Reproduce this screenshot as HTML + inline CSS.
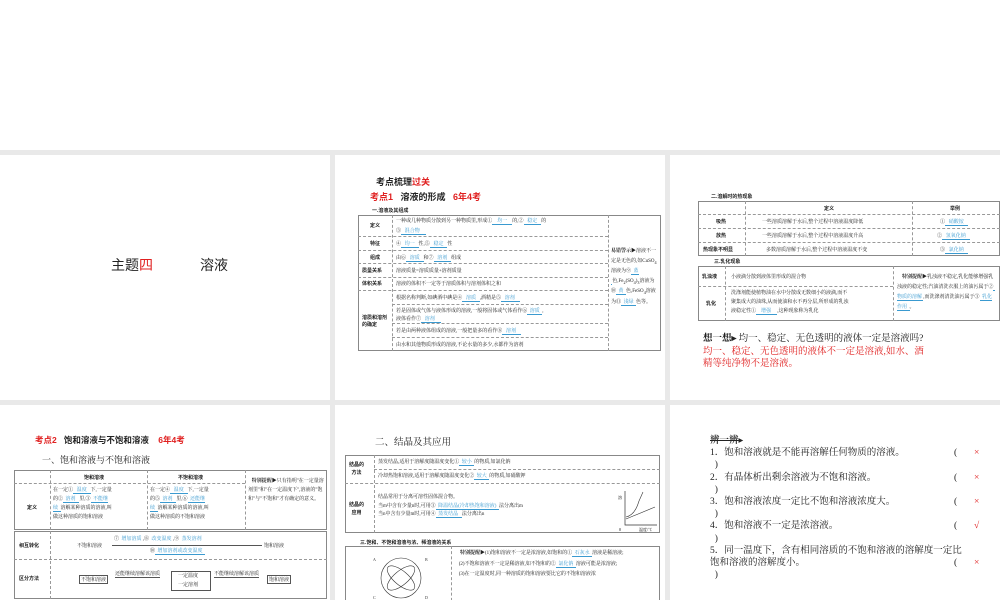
<!DOCTYPE html>
<html><head><meta charset="utf-8"><style>
*{margin:0;padding:0;box-sizing:border-box}
body{width:1000px;height:600px;background:#fff;position:relative;overflow:hidden;font-family:"Liberation Serif","Noto Serif CJK SC",serif;color:#222}
.bg{position:absolute;left:0;top:150px;width:1000px;height:450px;background:#e9e9e9}
.s{position:absolute;background:#fff;overflow:hidden}
.a{position:absolute;white-space:nowrap}
.r{color:#e02020}
.b{color:#3a9ad0}
.t{position:absolute;border:1px solid #888}
.h{position:absolute;border-top:1px dashed #999}
.v{position:absolute;border-left:1px dashed #999}
.f5{font-size:5px}.f6{font-size:6px}
.bold{font-weight:bold;font-family:"Liberation Sans","Noto Sans CJK SC",sans-serif}
.u{border-bottom:1px solid #3a9ad0}
</style></head><body>
<div class="bg"></div>

<!-- slide 1 -->
<div class="s" style="left:0;top:155px;width:330px;height:245px">
<div class="a" style="left:111px;top:100px;font-size:14px;font-family:'Liberation Sans','Noto Sans CJK SC',sans-serif">主题<span class="r">四</span></div>
<div class="a" style="left:200px;top:100px;font-size:14px;font-family:'Liberation Sans','Noto Sans CJK SC',sans-serif">溶液</div>
</div>

<!-- slide 2 -->
<div class="s" style="left:335px;top:155px;width:330px;height:245px">
<div class="a bold" style="left:41px;top:20px;font-size:9px">考点梳理<span class="r">过关</span></div>
<div class="a bold" style="left:35px;top:35px;font-size:9px"><span class="r">考点1</span>&nbsp;&nbsp; 溶液的形成 &nbsp;&nbsp;<span class="r">6年4考</span></div>
<div class="a bold f5" style="left:37px;top:52px">一.溶液及其组成</div>
<div class="t" style="left:23px;top:60px;width:303px;height:136px"></div>
<div class="v" style="left:57px;top:60px;height:136px"></div>
<div class="v" style="left:273px;top:60px;height:136px"></div>
<div class="h" style="left:23px;top:81px;width:250px"></div>
<div class="h" style="left:23px;top:95px;width:250px"></div>
<div class="h" style="left:23px;top:108px;width:250px"></div>
<div class="h" style="left:23px;top:122px;width:250px"></div>
<div class="h" style="left:23px;top:135px;width:250px"></div>
<div class="h" style="left:57px;top:149px;width:216px"></div>
<div class="h" style="left:57px;top:168px;width:216px"></div>
<div class="h" style="left:57px;top:182px;width:216px"></div>
<div class="a bold f5" style="left:35px;top:67px">定义</div>
<div class="a bold f5" style="left:35px;top:85px">特征</div>
<div class="a bold f5" style="left:35px;top:99px">组成</div>
<div class="a bold f5" style="left:27px;top:112px">质量关系</div>
<div class="a bold f5" style="left:27px;top:125px">体积关系</div>
<div class="a bold f5" style="left:27px;top:160px;line-height:7px;white-space:normal;width:28px">溶质和溶剂的确定</div>
<div class="a f5" style="left:61px;top:62px">一种或几种物质分散到另一种物质里,形成①<span class="b u">&nbsp;&nbsp;&nbsp; 均一 &nbsp;&nbsp;&nbsp;</span>的,②<span class="b u">&nbsp;&nbsp; 稳定 &nbsp;&nbsp;</span>的</div>
<div class="a f5" style="left:61px;top:72px">③<span class="b u">&nbsp;&nbsp; 混合物 &nbsp;&nbsp;&nbsp;&nbsp;</span></div>
<div class="a f5" style="left:61px;top:85px">④<span class="b u">&nbsp;&nbsp; 均一 &nbsp;&nbsp;</span>性,⑤<span class="b u">&nbsp;&nbsp; 稳定 &nbsp;&nbsp;</span>性</div>
<div class="a f5" style="left:61px;top:99px">由⑥<span class="b u">&nbsp;&nbsp; 溶质 &nbsp;&nbsp;</span>和⑦<span class="b u">&nbsp;&nbsp; 溶剂 &nbsp;&nbsp;</span>组成</div>
<div class="a f5" style="left:61px;top:112px">溶液质量=溶质质量+溶剂质量</div>
<div class="a f5" style="left:61px;top:125px">溶液的体积不一定等于溶质体积与溶剂体积之和</div>
<div class="a f5" style="left:61px;top:139px">根据名称判断,如碘酒中碘是④<span class="b u">&nbsp;&nbsp; 溶质 &nbsp;&nbsp;</span>,酒精是⑤<span class="b u">&nbsp;&nbsp; 溶剂 &nbsp;&nbsp;&nbsp;</span></div>
<div class="a f5" style="left:61px;top:152px">若是固体或气体与液体形成的溶液,一般将固体或气体看作⑥<span class="b u">&nbsp; 溶质 &nbsp;</span>,</div>
<div class="a f5" style="left:61px;top:160px">液体看作⑦<span class="b u">&nbsp;&nbsp; 溶剂 &nbsp;&nbsp;&nbsp;&nbsp;</span></div>
<div class="a f5" style="left:61px;top:172px">若是由两种液体组成的溶液,一般把量多的看作⑧<span class="b u">&nbsp;&nbsp; 溶剂 &nbsp;&nbsp;&nbsp;</span></div>
<div class="a f5" style="left:61px;top:186px">由水和其他物质形成的溶液,不论水量的多少,水都作为溶剂</div>
<div class="a f5" style="left:276px;top:92px;line-height:9.5px;white-space:normal;width:48px"><b>易错警示▶</b>溶液不一定是无色的,如CuSO<sub>4</sub>溶液为⑨<span class="b u">&nbsp; 蓝 &nbsp;</span>色,Fe<sub>2</sub>(SO<sub>4</sub>)<sub>3</sub>溶液为⑩<span class="b u">&nbsp; 黄 &nbsp;</span>色,FeSO<sub>4</sub>溶液为⑪<span class="b u">&nbsp; 浅绿 &nbsp;</span>色等。</div>
</div>

<!-- slide 3 -->
<div class="s" style="left:670px;top:155px;width:330px;height:245px">
<div class="a bold f5" style="left:41px;top:38px">二.溶解时的热现象</div>
<div class="t" style="left:28px;top:46px;width:302px;height:55px"></div>
<div class="v" style="left:75px;top:46px;height:55px"></div>
<div class="v" style="left:242px;top:46px;height:55px"></div>
<div class="h" style="left:28px;top:59px;width:302px"></div>
<div class="h" style="left:28px;top:73px;width:302px"></div>
<div class="h" style="left:28px;top:87px;width:302px"></div>
<div class="a bold f5" style="left:154px;top:50px">定义</div>
<div class="a bold f5" style="left:280px;top:50px">举例</div>
<div class="a bold f5" style="left:46px;top:63px">吸热</div>
<div class="a bold f5" style="left:46px;top:77px">放热</div>
<div class="a bold f5" style="left:33px;top:91px">热现象不明显</div>
<div class="a f5" style="left:92px;top:63px">一些溶质溶解于水后,整个过程中溶液温度降低</div>
<div class="a f5" style="left:92px;top:77px">一些溶质溶解于水后,整个过程中溶液温度升高</div>
<div class="a f5" style="left:96px;top:91px">多数溶质溶解于水后,整个过程中溶液温度不变</div>
<div class="a f5" style="left:270px;top:63px">①<span class="b u">&nbsp;&nbsp; 硝酸铵 &nbsp;&nbsp;</span></div>
<div class="a f5" style="left:267px;top:77px">②<span class="b u">&nbsp;&nbsp; 氢氧化钠 &nbsp;&nbsp;</span></div>
<div class="a f5" style="left:270px;top:91px">③<span class="b u">&nbsp;&nbsp; 氯化钠 &nbsp;&nbsp;</span></div>
<div class="a bold f5" style="left:44px;top:103px">三.乳化现象</div>
<div class="t" style="left:28px;top:111px;width:302px;height:55px"></div>
<div class="v" style="left:55px;top:111px;height:55px"></div>
<div class="v" style="left:223px;top:111px;height:55px"></div>
<div class="h" style="left:28px;top:131px;width:195px"></div>
<div class="a bold f5" style="left:32px;top:118px">乳浊液</div>
<div class="a bold f5" style="left:36px;top:145px">乳化</div>
<div class="a f5" style="left:61px;top:118px">小液滴分散到液体里形成的混合物</div>
<div class="a f5" style="left:61px;top:134px;line-height:9px">洗涤剂能使植物油在水中分散成无数细小的液滴,而不<br>聚集成大的油珠,从而使油和水不再分层,所形成的乳浊<br>液稳定性①<span class="b u">&nbsp;&nbsp;&nbsp; 增强 &nbsp;&nbsp;&nbsp;&nbsp;</span>,这种现象称为乳化</div>
<div class="a f5" style="left:227px;top:118px;line-height:10px;white-space:normal;width:100px"><b>&nbsp;&nbsp;&nbsp;&nbsp;特别提醒▶</b>乳浊液不稳定,乳化能够增强乳浊液的稳定性;汽油清洗衣服上的油污属于②<span class="b u">&nbsp; 物质的溶解 </span>,而洗涤剂清洗油污属于③<span class="b u">&nbsp; 乳化作用 &nbsp;</span>。</div>
<div class="a" style="left:33px;top:178px;font-size:9.5px;line-height:12px"><b>想一想▸</b> 均一、稳定、无色透明的液体一定是溶液吗?</div>
<div class="a r" style="left:33px;top:191px;font-size:9.5px;line-height:12px">均一、稳定、无色透明的液体不一定是溶液,如水、酒<br>精等纯净物不是溶液。</div>
</div>

<!-- slide 4 -->
<div class="s" style="left:0;top:405px;width:330px;height:195px">
<div class="a bold" style="left:35px;top:29px;font-size:8.5px"><span class="r">考点2</span>&nbsp;&nbsp; 饱和溶液与不饱和溶液 &nbsp;&nbsp;&nbsp;<span class="r">6年4考</span></div>
<div class="a" style="left:42px;top:48px;font-size:9px">一、饱和溶液与不饱和溶液</div>
<div class="t" style="left:14px;top:65px;width:313px;height:60px"></div>
<div class="v" style="left:50px;top:65px;height:60px"></div>
<div class="v" style="left:147px;top:65px;height:60px"></div>
<div class="v" style="left:245px;top:65px;height:60px"></div>
<div class="h" style="left:14px;top:78px;width:231px"></div>
<div class="a bold f5" style="left:84px;top:69px">饱和溶液</div>
<div class="a bold f5" style="left:178px;top:69px">不饱和溶液</div>
<div class="a bold f5" style="left:27px;top:99px">定义</div>
<div class="a f5" style="left:53px;top:81px;line-height:9px">在一定①<span class="b u">&nbsp;&nbsp; 温度 &nbsp;&nbsp;</span>下,一定量<br>的②<span class="b u">&nbsp; 溶剂 &nbsp;&nbsp;</span>里,③<span class="b u">&nbsp; 不能继</span><br><span class="b u">续 &nbsp;</span>溶解某种溶质的溶液,叫<br>做这种溶质的饱和溶液</div>
<div class="a f5" style="left:150px;top:81px;line-height:9px">在一定④<span class="b u">&nbsp;&nbsp; 温度 &nbsp;&nbsp;</span>下,一定量<br>的⑤<span class="b u">&nbsp; 溶剂 &nbsp;&nbsp;</span>里,⑥<span class="b u">&nbsp; 还能继</span><br><span class="b u">续 &nbsp;</span>溶解某种溶质的溶液,叫<br>做这种溶质的不饱和溶液</div>
<div class="a f5" style="left:248px;top:72px;line-height:9px;white-space:normal;width:77px"><b>&nbsp;&nbsp;&nbsp;特别提醒▶</b>只有指明"在一定量溶剂里"和"在一定温度下",溶液的"饱和"与"不饱和"才有确定的意义。</div>
<div class="t" style="left:14px;top:126px;width:313px;height:68px"></div>
<div class="v" style="left:50px;top:126px;height:68px"></div>
<div class="h" style="left:14px;top:154px;width:313px"></div>
<div class="a bold f5" style="left:19px;top:137px">相互转化</div>
<div class="a bold f5" style="left:19px;top:170px">区分方法</div>
<div class="a f5" style="left:77px;top:137px">不饱和溶液</div>
<div style="position:absolute;left:112px;top:140px;width:150px;border-top:1px solid #555"></div>
<div class="a f5" style="left:114px;top:130px">⑦<span class="b">&nbsp; 增加溶质 </span>,⑧<span class="b">&nbsp; 改变温度 </span>,⑨<span class="b">&nbsp; 蒸发溶剂 </span></div>
<div class="a f5" style="left:150px;top:142px">⑩<span class="b u">&nbsp; 增加溶剂或改变温度 &nbsp;</span></div>
<div class="a f5" style="left:264px;top:137px">饱和溶液</div>
<div class="a f5" style="left:79px;top:170px;border:1px solid #555;padding:0 1px">不饱和溶液</div>
<div class="a f5" style="left:115px;top:165px;border-bottom:1px solid #555">还能继续溶解该溶质</div>
<div style="position:absolute;left:171px;top:166px;width:40px;height:20px;border:1px solid #555"></div>
<div class="a f5" style="left:178px;top:167px;line-height:9px">一定温度<br>一定溶剂</div>
<div class="a f5" style="left:214px;top:165px;border-bottom:1px solid #555">不能继续溶解该溶质</div>
<div class="a f5" style="left:267px;top:170px;border:1px solid #555;padding:0 1px">饱和溶液</div>
</div>

<!-- slide 5 -->
<div class="s" style="left:335px;top:405px;width:330px;height:195px">
<div class="a" style="left:40px;top:29px;font-size:9.5px">二、结晶及其应用</div>
<div class="t" style="left:10px;top:50px;width:315px;height:78px"></div>
<div class="v" style="left:39px;top:50px;height:78px"></div>
<div class="h" style="left:39px;top:64px;width:286px"></div>
<div class="h" style="left:10px;top:78px;width:315px"></div>
<div class="a bold f5" style="left:14px;top:56px;line-height:8px;text-align:center">结晶的<br>方法</div>
<div class="a bold f5" style="left:14px;top:96px;line-height:8px;text-align:center">结晶的<br>应用</div>
<div class="a f5" style="left:43px;top:53px">蒸发结晶,适用于溶解度随温度变化①<span class="b u">&nbsp; 较小 &nbsp;</span>的物质,如氯化钠</div>
<div class="a f5" style="left:43px;top:67px">冷却热饱和溶液,适用于溶解度随温度变化②<span class="b u">&nbsp; 较大 &nbsp;</span>的物质,如硝酸钾</div>
<div class="a f5" style="left:43px;top:89px;line-height:8.5px">结晶常用于分离可溶性固体混合物。<br>当m中含有少量n时,可用③<span class="b u">&nbsp; 降温结晶(冷却热饱和溶液) &nbsp;</span>法分离出m<br>当n中含有少量m时,可用④<span class="b u">&nbsp; 蒸发结晶 &nbsp;&nbsp;</span>法分离出n</div>
<svg style="position:absolute;left:282px;top:84px" width="42" height="44"><path d="M8 2V36H40" stroke="#333" fill="none" stroke-width=".7"/><path d="M9 28Q18 26 22 12L26 3" stroke="#333" fill="none" stroke-width=".6"/><path d="M9 30L38 18" stroke="#333" fill="none" stroke-width=".6"/><text x="2" y="42" font-size="4">0</text><text x="22" y="42" font-size="4">温度/℃</text><text x="1" y="10" font-size="4">溶</text></svg>
<div class="a bold f5" style="left:25px;top:134px">三.饱和、不饱和溶液与浓、稀溶液的关系</div>
<div class="t" style="left:10px;top:141px;width:315px;height:60px"></div>
<div class="v" style="left:116px;top:141px;height:60px"></div>
<svg style="position:absolute;left:36px;top:150px" width="60" height="46" fill="none" stroke="#333" stroke-width=".6"><circle cx="30" cy="23" r="20"/><ellipse cx="30" cy="23" rx="17" ry="7" transform="rotate(40 30 23)"/><ellipse cx="30" cy="23" rx="17" ry="7" transform="rotate(-40 30 23)"/><text x="2" y="6" font-size="4" fill="#333" stroke="none">A</text><text x="54" y="6" font-size="4" fill="#333" stroke="none">B</text><text x="2" y="44" font-size="4" fill="#333" stroke="none">C</text><text x="54" y="44" font-size="4" fill="#333" stroke="none">D</text></svg>
<div class="a f5" style="left:120px;top:144px;line-height:10.5px;white-space:normal;width:202px"><b>&nbsp;&nbsp;&nbsp;&nbsp;特别提醒▶</b>(1)饱和溶液不一定是浓溶液,如饱和的①<span class="b u">&nbsp; 石灰水 &nbsp;</span>溶液是稀溶液;<br>&nbsp;&nbsp;&nbsp;(2)不饱和溶液不一定是稀溶液,如不饱和的②<span class="b u">&nbsp; 氯化钠 &nbsp;</span>溶液可能是浓溶液;<br>&nbsp;&nbsp;&nbsp;(3)在一定温度时,同一种溶质的饱和溶液要比它的不饱和溶液浓</div>
</div>

<!-- slide 6 -->
<div class="s" style="left:670px;top:405px;width:330px;height:195px">
<div class="a" style="left:40px;top:30px;font-size:9.5px;line-height:12.2px;white-space:normal;width:280px">
<b style="text-decoration:line-through">辨一辨</b>▸<br>
1．饱和溶液就是不能再溶解任何物质的溶液。<span style="position:absolute;left:244px">(</span><span class="r" style="position:absolute;left:264px">×</span><br>&nbsp;&nbsp;)<br>
2．有晶体析出剩余溶液为不饱和溶液。<span style="position:absolute;left:244px">(</span><span class="r" style="position:absolute;left:264px">×</span><br>&nbsp;&nbsp;)<br>
3．饱和溶液浓度一定比不饱和溶液浓度大。<span style="position:absolute;left:244px">(</span><span class="r" style="position:absolute;left:264px">×</span><br>&nbsp;&nbsp;)<br>
4．饱和溶液不一定是浓溶液。<span style="position:absolute;left:244px">(</span><span class="r" style="position:absolute;left:264px">√</span><br>&nbsp;&nbsp;)<br>
5．同一温度下，含有相同溶质的不饱和溶液的溶解度一定比<br>饱和溶液的溶解度小。<span style="position:absolute;left:244px">(</span><span class="r" style="position:absolute;left:264px">×</span><br>&nbsp;&nbsp;)
</div>
</div>
</body></html>
